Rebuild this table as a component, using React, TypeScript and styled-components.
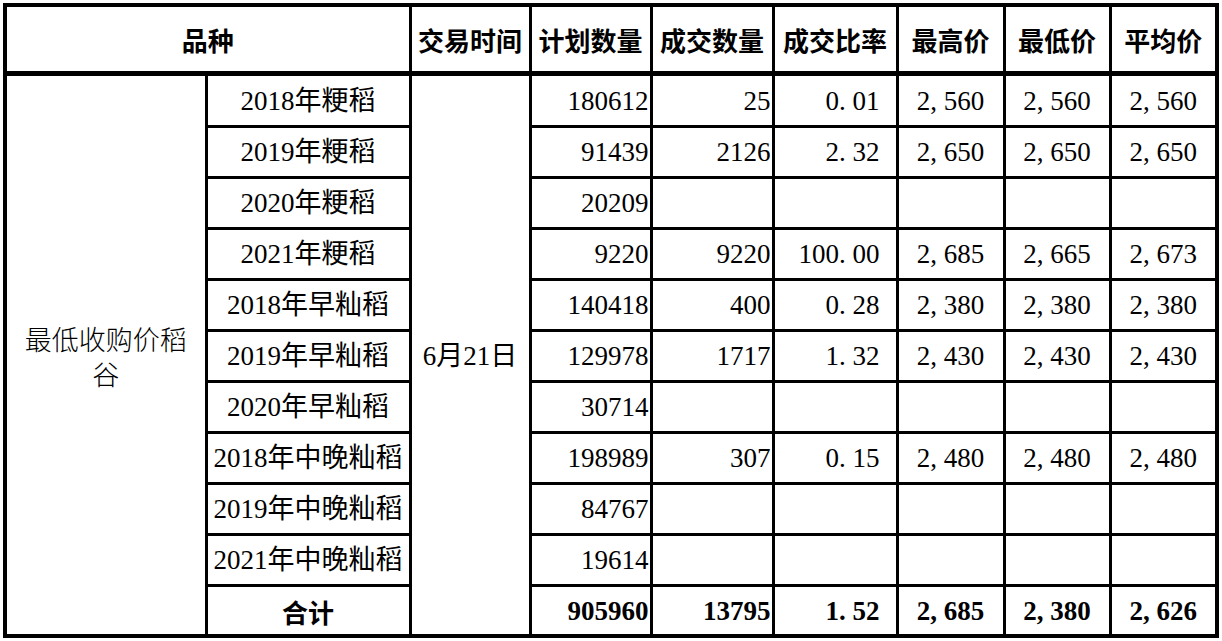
import React from 'react'
import styled, { createGlobalStyle } from 'styled-components'

const GlobalStyle = createGlobalStyle`
  html, body {
    margin: 0;
    padding: 0;
    background: #ffffff;
  }
  body {
    font-family: "Liberation Serif", "Noto Sans CJK SC", serif;
    color: #000;
  }
`

const Sheet = styled.div`
  padding: 3px 0 0 3px;
`

const Table = styled.table`
  width: 1216px;
  table-layout: fixed;
  border-collapse: collapse;
  border: 4px solid #000;
`

const HeadRow = styled.tr`
  height: 68px;
`

const BodyRow = styled.tr<{ $h: number }>`
  height: ${(p) => p.$h}px;
`

const HeadCell = styled.th`
  border: 3px solid #000;
  border-bottom-width: 5px;
  padding: 2px 0 0;
  font-family: "Noto Sans CJK SC", sans-serif;
  font-weight: 700;
  font-size: 26px;
  text-align: center;
  vertical-align: middle;
  white-space: nowrap;
`

const Cell = styled.td<{ $align?: 'left' | 'center' | 'right'; $padR?: number; $bold?: boolean }>`
  border: 3px solid #000;
  padding: 3px ${(p) => p.$padR ?? 1}px 0 1px;
  font-size: 27px;
  line-height: 1.3;
  font-weight: ${(p) => (p.$bold ? 700 : 400)};
  text-align: ${(p) => p.$align ?? 'right'};
  vertical-align: middle;
  white-space: nowrap;
`

const GroupCell = styled(Cell)`
  white-space: normal;
  padding: 3px 10px 0;
  font-family: "Noto Sans CJK SC", serif;
  font-weight: 300;
`

const SumLabel = styled(Cell)`
  font-family: "Noto Sans CJK SC", sans-serif;
  font-size: 26px;
`

const Punct = styled.span`
  display: inline-block;
  width: 0.5em;
  text-align: left;
`

// half-width punctuation like the sheet's song font
function Num({ v }: { v: string }) {
  return (
    <>
      {v.split(/([.,])/).map((part, i) =>
        part === '.' || part === ',' ? <Punct key={i}>{part}</Punct> : part
      )}
    </>
  )
}

type Row = [string, string, string?, string?, string?, string?, string?]

const rows: Row[] = [
  ['2018年粳稻', '180612', '25', '0.01', '2,560', '2,560', '2,560'],
  ['2019年粳稻', '91439', '2126', '2.32', '2,650', '2,650', '2,650'],
  ['2020年粳稻', '20209'],
  ['2021年粳稻', '9220', '9220', '100.00', '2,685', '2,665', '2,673'],
  ['2018年早籼稻', '140418', '400', '0.28', '2,380', '2,380', '2,380'],
  ['2019年早籼稻', '129978', '1717', '1.32', '2,430', '2,430', '2,430'],
  ['2020年早籼稻', '30714'],
  ['2018年中晚籼稻', '198989', '307', '0.15', '2,480', '2,480', '2,480'],
  ['2019年中晚籼稻', '84767'],
  ['2021年中晚籼稻', '19614'],
]

const total = ['905960', '13795', '1.52', '2,685', '2,380', '2,626']

const widths = [201, 204, 120, 121, 122, 124, 107, 106, 107]

function DataCells({ vals, bold }: { vals: (string | undefined)[]; bold?: boolean }) {
  const [plan, deal, rate, hi, lo, avg] = vals
  return (
    <>
      <Cell $bold={bold}>{plan && <Num v={plan} />}</Cell>
      <Cell $bold={bold}>{deal && <Num v={deal} />}</Cell>
      <Cell $bold={bold} $padR={16}>{rate && <Num v={rate} />}</Cell>
      <Cell $bold={bold} $align="center">{hi && <Num v={hi} />}</Cell>
      <Cell $bold={bold} $align="center">{lo && <Num v={lo} />}</Cell>
      <Cell $bold={bold} $align="center">{avg && <Num v={avg} />}</Cell>
    </>
  )
}

export default function App() {
  return (
    <Sheet>
      <GlobalStyle />
      <Table>
        <colgroup>
          {widths.map((w, i) => (
            <col key={i} style={{ width: w }} />
          ))}
        </colgroup>
        <thead>
          <HeadRow>
            <HeadCell colSpan={2}>品种</HeadCell>
            <HeadCell>交易时间</HeadCell>
            <HeadCell>计划数量</HeadCell>
            <HeadCell>成交数量</HeadCell>
            <HeadCell>成交比率</HeadCell>
            <HeadCell>最高价</HeadCell>
            <HeadCell>最低价</HeadCell>
            <HeadCell>平均价</HeadCell>
          </HeadRow>
        </thead>
        <tbody>
          {rows.map(([name, ...vals], i) => (
            <BodyRow key={name} $h={i === 0 ? 53 : 51}>
              {i === 0 && (
                <GroupCell rowSpan={rows.length + 1} $align="center">
                  最低收购价稻谷
                </GroupCell>
              )}
              <Cell $align="center">{name}</Cell>
              {i === 0 && (
                <Cell rowSpan={rows.length + 1} $align="center">
                  6月21日
                </Cell>
              )}
              <DataCells vals={vals} />
            </BodyRow>
          ))}
          <BodyRow $h={51}>
            <SumLabel $align="center" $bold>
              合计
            </SumLabel>
            <DataCells vals={total} bold />
          </BodyRow>
        </tbody>
      </Table>
    </Sheet>
  )
}
